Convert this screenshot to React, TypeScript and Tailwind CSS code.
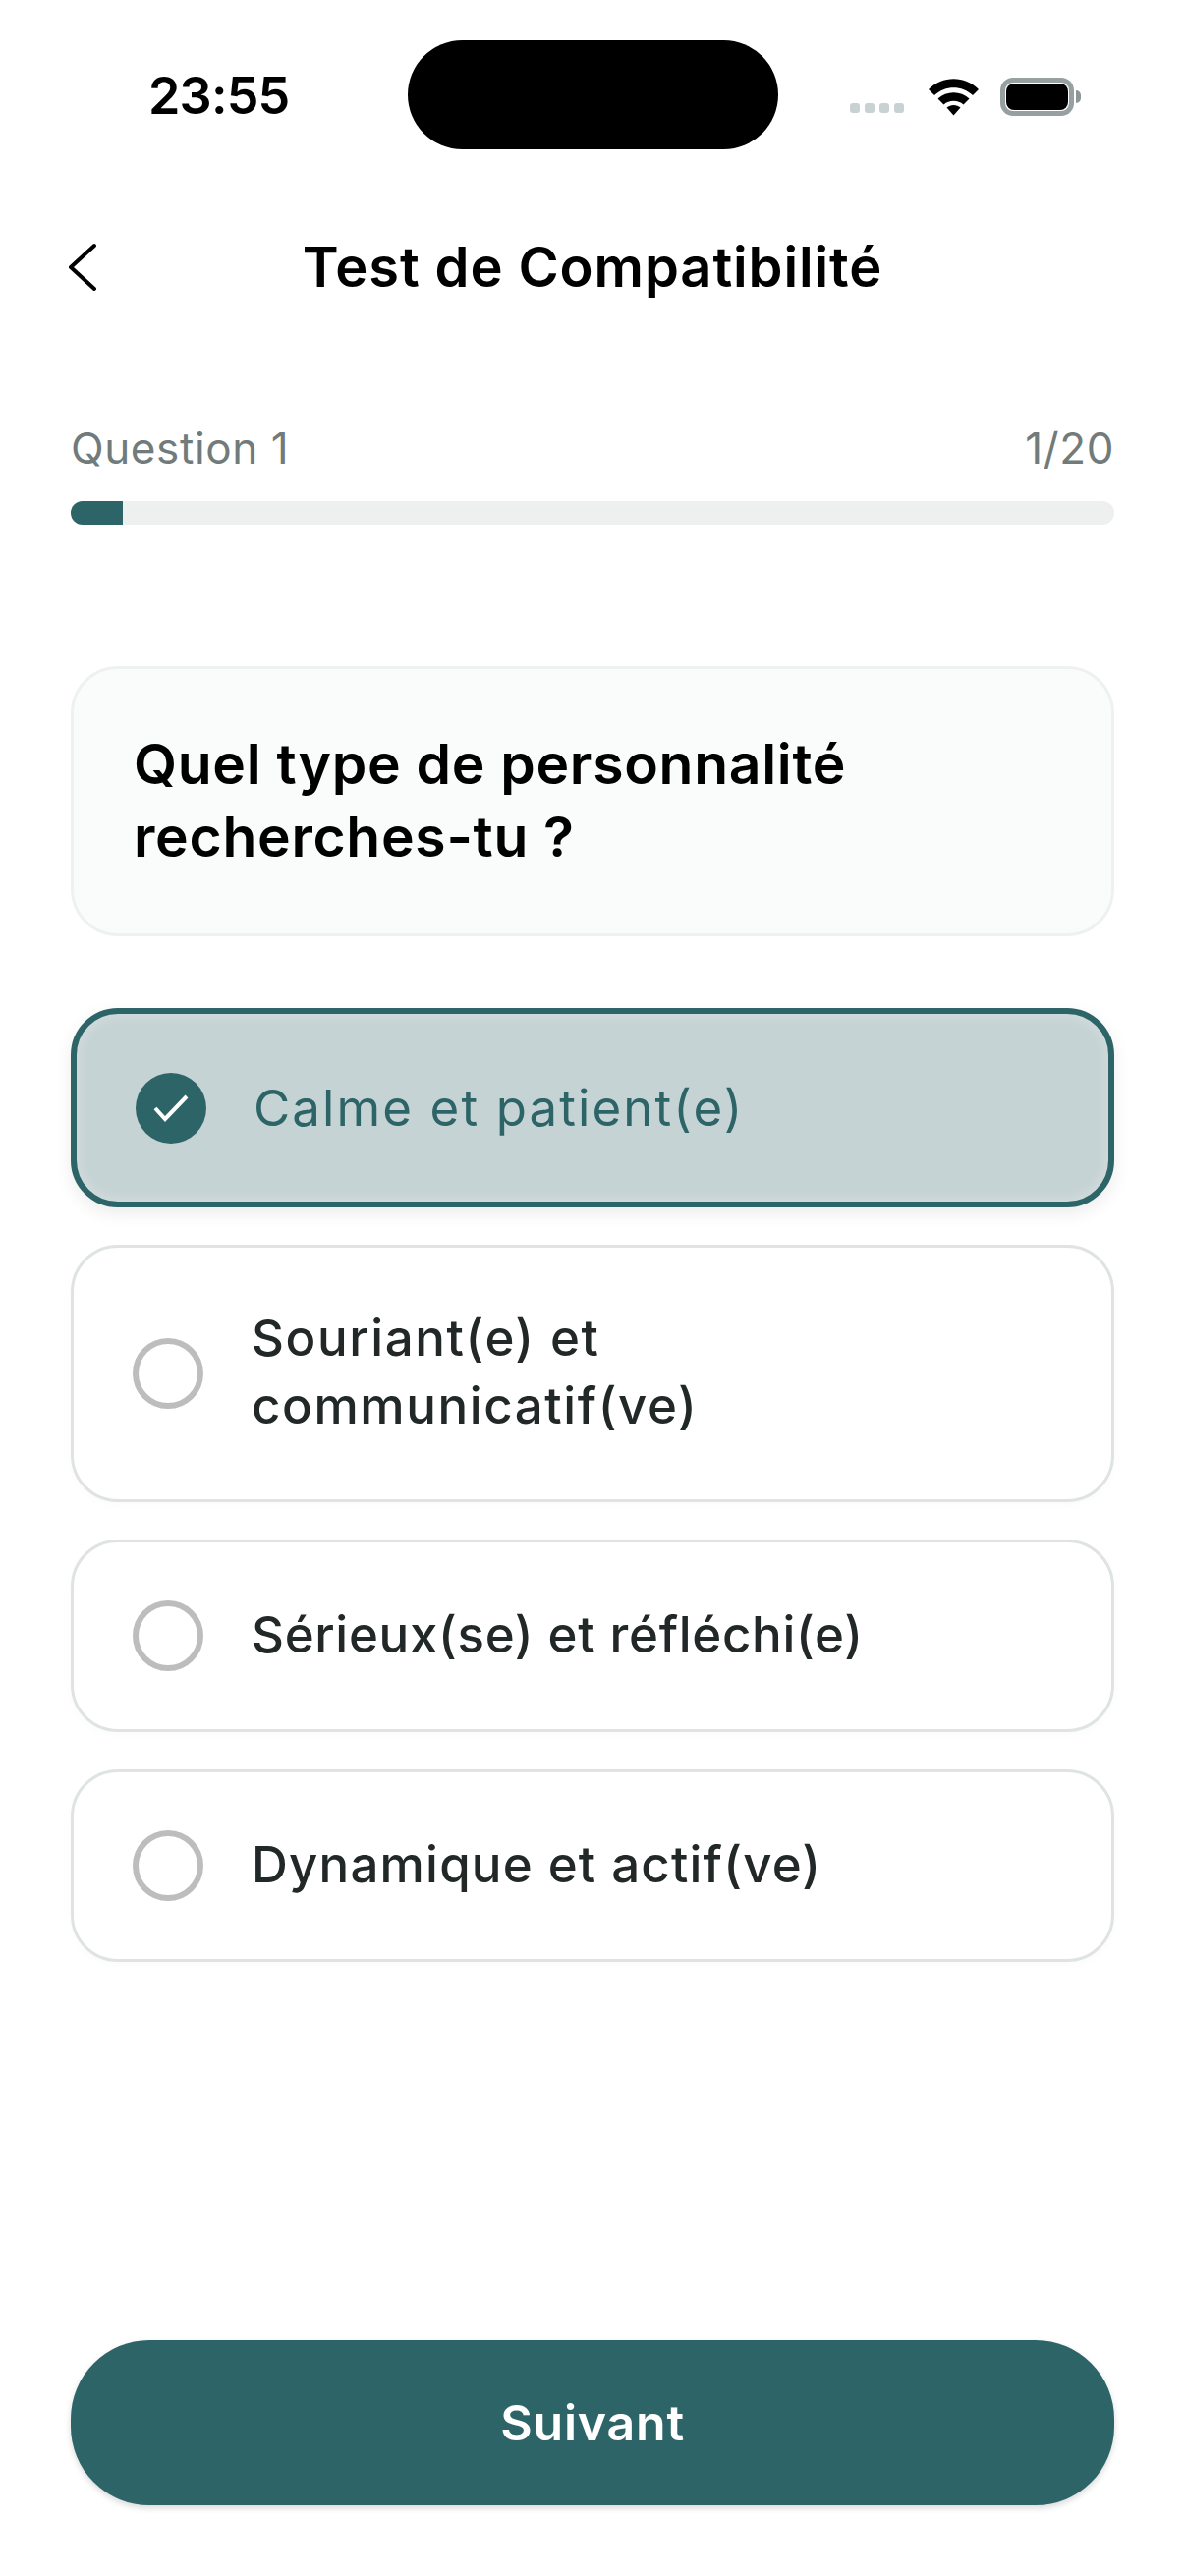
const FONT = "font-['Inter','Liberation_Sans',sans-serif]";

const options = [
  { label: 'Calme et patient(e)', selected: true, spacing: 'tracking-[2.1px]' },
  { label: 'Souriant(e) et communicatif(ve)', selected: false, spacing: 'tracking-[1.6px]' },
  { label: 'Sérieux(se) et réfléchi(e)', selected: false, spacing: 'tracking-[0.7px]' },
  { label: 'Dynamique et actif(ve)', selected: false, spacing: 'tracking-[1.2px]' },
];

const StatusBar = () => (
  <div className="flex items-start pt-[41px] h-[152px]">
    <div className="w-[415px] pl-[151px] pt-[32px] text-[52px] leading-[50px] font-semibold text-black tracking-[-0.8px]">
      23:55
    </div>
    <div className="w-[377px] h-[111px] rounded-[56px] bg-black" />
    <div className="flex items-center pl-[73px] pt-[37px] h-[78px]">
      <div className="flex gap-[5px] mt-[22px]">
        <div className="w-[10px] h-[10px] rounded-[3px] bg-[#c8d2d2]" />
        <div className="w-[10px] h-[10px] rounded-[3px] bg-[#c8d2d2]" />
        <div className="w-[10px] h-[10px] rounded-[3px] bg-[#c8d2d2]" />
        <div className="w-[10px] h-[10px] rounded-[3px] bg-[#c8d2d2]" />
      </div>
      <svg className="ml-[25px] w-[51px] h-[38px]" viewBox="0 0 51 38" fill="#000">
        <path d="M0 11 C14 -3.5 37 -3.5 51 11 L45 17 C34 6.5 17 6.5 6 17 Z" />
        <path d="M9.5 20.5 C18.5 12 32.5 12 41.5 20.5 L35.5 26.5 C30 21.5 21 21.5 15.5 26.5 Z" />
        <path d="M18.5 29.5 C22.5 26 28.5 26 32.5 29.5 L25.5 37.5 Z" />
      </svg>
      <div className="ml-[22px] w-[75px] h-[39px] rounded-[13px] border-[5px] border-[#96a0a0] p-px">
        <div className="w-full h-full rounded-[8px] bg-black" />
      </div>
      <div className="ml-[2px] w-[5px] h-[13px] rounded-r-full bg-[#8d9797]" />
    </div>
  </div>
);

export default function App() {
  return (
    <div className={`${FONT} w-[1206px] h-[2622px] bg-white flex flex-col overflow-hidden`}>
      <StatusBar />

      <div className="flex items-center justify-between pl-[69px] pr-[72px] h-[78px] mt-[81px]">
        <svg className="w-[30px] h-[50px]" viewBox="0 0 30 50" fill="none" stroke="#000" strokeWidth="4" strokeLinecap="round" strokeLinejoin="round">
          <polyline points="27,3 3,25 27,47" />
        </svg>
        <div className="text-[56px] leading-[78px] font-semibold text-black tracking-[0.9px]">Test de Compatibilité</div>
        <div className="w-[27px]" />
      </div>

      <div className="px-[72px] mt-[114px]">
        <div className="flex justify-between text-[44px] leading-[62px] text-[#717b7b] tracking-[0.6px]">
          <span>Question 1</span>
          <span>1/20</span>
        </div>
        <div className="h-[24px] rounded-full bg-[#eef0f0] overflow-hidden mt-[23px]">
          <div className="h-full bg-[#2c6467]" style={{ width: `${(1 / 20) * 100}%` }} />
        </div>

        <div className="mt-[144px] h-[275px] rounded-[48px] border-[3px] border-[#eff1f1] bg-[#fafbfb] px-[61px] pt-[60px]">
          <div className="text-[57px] leading-[74px] font-semibold text-black tracking-[0.7px]">
            Quel type de personnalité
            <br />
            recherches-tu ?
          </div>
        </div>

        <div className="mt-[73px] flex flex-col gap-[38px]">
          {options.map((option) =>
            option.selected ? (
              <div
                key={option.label}
                className="h-[203px] rounded-[48px] border-[6px] border-[#2c6467] bg-[#c6d3d4] flex items-center pl-[60px] shadow-[0_6px_18px_rgba(0,0,0,0.08),inset_0_0_14px_rgba(255,255,255,0.3)]"
              >
                <div className="w-[72px] h-[72px] rounded-full bg-[#2c6467] flex items-center justify-center shrink-0">
                  <svg className="w-[36px] h-[28px]" viewBox="0 0 36 28" fill="none" stroke="#fff" strokeWidth="4">
                    <polyline points="2,14 12,25 34,2" />
                  </svg>
                </div>
                <span className={`ml-[48px] text-[51px] leading-[69px] text-[#2c6467] ${option.spacing}`}>{option.label}</span>
              </div>
            ) : (
              <div
                key={option.label}
                className="rounded-[48px] border-[3px] border-[#dfe3e3] bg-white flex items-center pl-[60px] pr-[200px] py-[59px] shadow-[0_3px_9px_rgba(0,0,0,0.02)]"
              >
                <div className="w-[72px] h-[72px] rounded-full border-[6px] border-[#bdbdbd] shrink-0" />
                <span className={`ml-[49px] -translate-y-[2px] text-[51px] leading-[69px] font-medium text-[#222727] ${option.spacing}`}>{option.label}</span>
              </div>
            ),
          )}
        </div>
      </div>

      <div className="px-[72px] mt-auto mb-[72px]">
        <div className="h-[168px] rounded-[80px] bg-[#2c6467] flex items-center justify-center text-[50px] font-semibold text-white tracking-[0.8px] shadow-[0_3px_6px_rgba(0,0,0,0.15)]">
          Suivant
        </div>
      </div>
    </div>
  );
}
